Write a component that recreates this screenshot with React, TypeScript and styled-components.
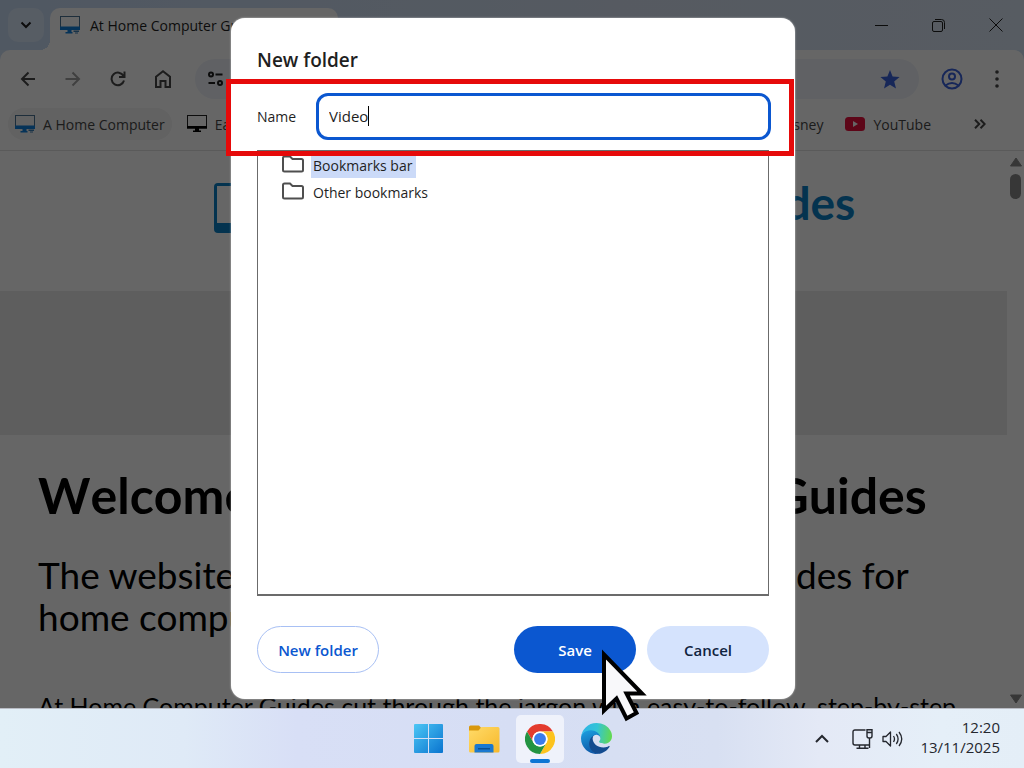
import React, { useState } from "react";
import styled, { createGlobalStyle, css } from "styled-components";

const UI_FONT = `"Open Sans", "Noto Sans", sans-serif`;
const PAGE_FONT = `Lato, "Liberation Sans", sans-serif`;

const GlobalStyle = createGlobalStyle`
  *, *::before, *::after { box-sizing: border-box; }
  body { margin: 0; overflow: hidden; font-family: ${UI_FONT}; font-size: 14px; color: #1f1f1f; }
  button, input { font: inherit; color: inherit; }
  h1, h2, p, ul { margin: 0; padding: 0; }
  svg { display: block; flex: none; }
`;

const Desktop = styled.div`
  height: 100vh;
  display: grid;
  grid-template-rows: minmax(0, 1fr) 60px;
`;

const BrowserWindow = styled.div`
  position: relative;
  display: flex;
  flex-direction: column;
  min-height: 0;
  background: #fff;
`;

const TitleBar = styled.header`
  flex: none;
  display: flex;
  height: 50px;
  padding-left: 8px;
  background: linear-gradient(90deg, #c8dcf5, #d6e2f3 60%, #dae5f4);
`;

const TabSearch = styled.button`
  display: grid;
  place-items: center;
  width: 36px;
  height: 34px;
  margin: 8px 6px 0 0;
  padding: 0;
  border: 0;
  border-radius: 10px;
  background: #dae8fb;
`;

const Tab = styled.div`
  position: relative;
  display: flex;
  align-items: center;
  gap: 10px;
  width: 288px;
  height: 42px;
  margin-top: 8px;
  padding: 0 10px 8px;
  border-radius: 10px 10px 0 0;
  background: #fff;
  font-size: 14px;
  white-space: nowrap;
  &::before {
    content: "";
    position: absolute;
    left: -10px;
    bottom: 0;
    width: 10px;
    height: 10px;
    background: radial-gradient(circle at 0 0, transparent 10px, #fff 10px);
  }
`;

const WindowControls = styled.div`
  display: flex;
  margin-left: auto;
`;

const WindowButton = styled.button`
  display: grid;
  place-items: center;
  width: 57px;
  height: 50px;
  padding: 0;
  border: 0;
  background: none;
`;

const ToolbarBack = styled.div`
  flex: none;
  background: #d0e0f5;
`;

const Toolbar = styled.div`
  display: flex;
  align-items: center;
  height: 58px;
  padding: 0 5px;
  border-radius: 10px 10px 0 0;
  background: #fff;
`;

const ToolButton = styled.button<{ $muted?: boolean }>`
  display: grid;
  place-items: center;
  width: 45px;
  height: 40px;
  padding: 0;
  border: 0;
  background: none;
  color: ${(p) => (p.$muted ? "#a0a0a0" : "#474747")};
`;

const Omnibox = styled.div`
  flex: 1;
  display: flex;
  align-items: center;
  justify-content: space-between;
  height: 40px;
  margin: 0 10px;
  padding: 0 19px 0 12px;
  border-radius: 20px;
  background: #eff3fa;
`;

const BookmarksBar = styled.nav`
  flex: none;
  display: flex;
  align-items: center;
  height: 43px;
  padding: 0 8px 10px;
  border-bottom: 1px solid #e2e2e2;
`;

const Bookmark = styled.a<{ $hovered?: boolean; $end?: boolean }>`
  display: flex;
  align-items: center;
  gap: 8px;
  height: 32px;
  padding: 0 7px;
  margin-right: 8px;
  margin-left: ${(p) => (p.$end ? "auto" : "0")};
  border-radius: 16px;
  background: ${(p) => (p.$hovered ? "#f4f4f4" : "transparent")};
  color: #474747;
  text-decoration: none;
  white-space: nowrap;
`;

const MoreBookmarks = styled.button`
  display: grid;
  place-items: center;
  width: 28px;
  margin: 0 22px 0 20px;
  padding: 0;
  border: 0;
  background: none;
`;

const Viewport = styled.div`
  flex: 1;
  min-height: 0;
  display: grid;
  grid-template-columns: minmax(0, 1fr) 17px;
`;

const Page = styled.div`
  overflow: hidden;
  font-family: ${PAGE_FONT};
  color: #000;
`;

const SiteHeader = styled.div`
  display: flex;
  justify-content: center;
  gap: 24px;
  height: 140px;
  padding: 24px 0 0 62px;
`;

const SiteName = styled.div`
  font-size: 46px;
  line-height: 56px;
  font-weight: 700;
  color: #0b80c6;
  white-space: nowrap;
`;

const Banner = styled.div`
  height: 144px;
  background: #ececec;
`;

const Article = styled.main`
  padding: 30px 38px 0;
  white-space: nowrap;
`;

const Heading = styled.h1`
  font-size: 50px;
  line-height: 60px;
  font-weight: 700;
  font-kerning: none;
`;

const Lead = styled.h2`
  margin-top: 29px;
  font-size: 37px;
  line-height: 42px;
  font-weight: 400;
`;

const Paragraph = styled.p`
  margin-top: 53px;
  font-size: 25px;
  line-height: 30px;
`;

const Scrollbar = styled.div`
  display: flex;
  flex-direction: column;
  align-items: center;
  padding: 6px 0 4px;
`;

const Thumb = styled.div`
  width: 11px;
  height: 25px;
  margin: 7px 0 auto;
  border-radius: 6px;
  background: #8b8b8b;
`;

const Backdrop = styled.div`
  position: absolute;
  inset: 0;
  display: flex;
  justify-content: center;
  padding: 18px 0 9px 2px;
  background: rgba(0, 0, 0, 0.6);
`;

const Dialog = styled.form`
  display: flex;
  flex-direction: column;
  width: 564px;
  padding: 28px 26px 26px;
  border-radius: 14px;
  background: #fff;
  box-shadow: 0 0 2px rgba(255, 255, 255, 0.7);
`;

const DialogTitle = styled.h2`
  font-size: 19px;
  line-height: 28px;
  font-weight: 600;
`;

const NameRow = styled.div`
  position: relative;
  display: flex;
  align-items: center;
  margin-top: 19px;
`;

const NameLabel = styled.label`
  width: 59px;
`;

const InputWrap = styled.div`
  position: relative;
  flex: 1;
  margin-right: -2px;
`;

const NameInput = styled.input`
  display: block;
  width: 100%;
  height: 47px;
  padding: 0 10px 2px;
  border: 3px solid #0b57d0;
  border-radius: 12px;
  background: #fff;
  font-size: 15px;
  outline: none;
  caret-color: transparent;
`;

const Caret = styled.span`
  position: absolute;
  top: 13px;
  left: 52px;
  width: 1px;
  height: 20px;
  background: #000;
`;

const Highlight = styled.div`
  position: absolute;
  inset: -14px -25px -16px -31px;
  border: 5px solid #e60a0a;
  pointer-events: none;
`;

const FolderTree = styled.ul`
  flex: 1;
  min-height: 0;
  margin-top: 10px;
  padding: 1px 24px;
  list-style: none;
  border: 1px solid #6b6b6b;
  border-bottom-width: 2px;
`;

const FolderRow = styled.button<{ $selected?: boolean }>`
  display: flex;
  align-items: flex-start;
  gap: 7px;
  height: 27px;
  padding: 3px 0 0;
  border: 0;
  background: none;
  span {
    padding: 1px 4px 2px 2px;
    line-height: 20px;
    background: ${(p) => (p.$selected ? "#cbdaf8" : "transparent")};
  }
`;

const Actions = styled.div`
  display: flex;
  gap: 11px;
  margin-top: 30px;
`;

const kinds = {
  outline: css`
    margin-right: auto;
    border: 1px solid #a8c0f4;
    background: #fff;
    color: #0b57d0;
  `,
  primary: css`
    border: 0;
    background: #0b57d0;
    color: #fff;
  `,
  tonal: css`
    border: 0;
    background: #d5e3fd;
    color: #10233f;
  `,
};

const ActionButton = styled.button<{ $kind: keyof typeof kinds }>`
  position: relative;
  width: 122px;
  height: 47px;
  padding: 0;
  border-radius: 24px;
  font-size: 15px;
  font-weight: 600;
  ${(p) => kinds[p.$kind]}
`;

const Pointer = styled.svg`
  position: absolute;
  z-index: 1;
  top: 20px;
  left: 84px;
  pointer-events: none;
`;

const Taskbar = styled.footer`
  display: grid;
  grid-template-columns: 1fr auto 1fr;
  align-items: center;
  border-top: 1px solid #b9bcc4;
  background: linear-gradient(90deg, #e2eff7 0%, #dfeaf7 18%, #d8dff6 29%, #d6def4 50%, #d8e0f2 70%, #e4e9f6 80%, #e5eff8 92%, #e4eef7 100%);
`;

const Apps = styled.div`
  grid-column: 2;
  display: flex;
  gap: 8px;
`;

const AppButton = styled.button<{ $active?: boolean }>`
  position: relative;
  display: grid;
  place-items: center;
  width: 48px;
  height: 48px;
  padding: 0;
  border: 0;
  border-radius: 5px;
  background: ${(p) => (p.$active ? "#eff2fb" : "none")};
  &::after {
    content: "";
    position: absolute;
    bottom: 0;
    left: 14px;
    width: 20px;
    height: 4px;
    border-radius: 2px;
    background: ${(p) => (p.$active ? "#0c76d4" : "none")};
  }
`;

const Tray = styled.div`
  display: flex;
  align-items: center;
  justify-content: flex-end;
  gap: 8px;
  padding-right: 24px;
  color: #24272e;
`;

const TrayButton = styled.button<{ $gapAfter?: number }>`
  margin-right: ${(p) => p.$gapAfter ?? 0}px;
  padding: 0;
  border: 0;
  background: none;
`;

const Clock = styled.time`
  margin-left: 8px;
  padding-bottom: 4px;
  font-size: 15px;
  line-height: 20px;
  text-align: right;
`;

const line = { fill: "none", stroke: "currentColor", strokeWidth: 2 } as const;

function Monitor() {
  return (
    <svg width="20" height="18" viewBox="0 0 20 18" aria-hidden="true">
      <rect x="0.5" y="0.5" width="19" height="12.5" fill="none" stroke="#222" />
      <path d="M0 11h20v2.500H0z" />
      <path d="M8 13h4v2.500h2V17H6v-1.500h2z" />
    </svg>
  );
}

function HomeComputerIcon() {
  return (
    <svg width="20" height="18" viewBox="0 0 20 18" aria-hidden="true">
      <rect x="0.5" y="0.5" width="19" height="12" fill="none" stroke="#4c7395" />
      <path d="M0 10.500h20V14H0z" fill="#0f80dc" />
      <path d="M7.500 14h4v2h1v1.500H5.500V16h2z" fill="#0f80dc" />
      <path d="M13.500 14.500h5.500v1.500h-5.500zM15 16.500h3v1h-3z" fill="#3d7fb5" />
    </svg>
  );
}

function Folder() {
  return (
    <svg width="22" height="18" viewBox="0 0 22 18" aria-hidden="true">
      <path d="M1 3Q1 1.500 2.500 1.500H8L10.500 4h9Q21 4 21 5.500V15q0 1.500-1.500 1.500h-17Q1 16.500 1 15z" fill="none" stroke="#4f4f4f" strokeWidth="2" />
    </svg>
  );
}

function Chrome() {
  return (
    <svg width="30" height="30" viewBox="0 0 48 48" aria-hidden="true">
      <circle cx="24" cy="24" r="24" fill="#fff" />
      <path d="M3.200 12A24 24 0 0 1 44.800 12H24A12 12 0 0 0 13.600 30z" fill="#e33b2e" />
      <path d="M44.800 12A24 24 0 0 1 24 48L34.400 30A12 12 0 0 0 24 12z" fill="#fcc31e" />
      <path d="M24 48A24 24 0 0 1 3.200 12L13.600 30A12 12 0 0 0 34.400 30z" fill="#229342" />
      <circle cx="24" cy="24" r="12" fill="#fff" />
      <circle cx="24" cy="24" r="9.500" fill="#3a7cec" />
    </svg>
  );
}

function Edge() {
  return (
    <svg width="31" height="31" viewBox="0 0 256 256" aria-hidden="true">
      <defs>
        <linearGradient id="edgeTop" x1="0" y1="0.4" x2="1" y2="0.5">
          <stop offset="0" stopColor="#2fb3e8" />
          <stop offset="0.5" stopColor="#34c4d6" />
          <stop offset="1" stopColor="#62d94f" />
        </linearGradient>
        <linearGradient id="edgeLeft" x1="0.3" y1="0" x2="0.6" y2="1">
          <stop offset="0" stopColor="#1c9fe0" />
          <stop offset="1" stopColor="#0d54a4" />
        </linearGradient>
      </defs>
      <path d="M231 190.500c-3.400 1.800-6.900 3.300-10.500 4.700a101.900 101.900 0 0 1-35.900 6.500c-47.300 0-88.500-32.500-88.500-74.300a31.500 31.500 0 0 1 16.400-27.300c-42.800 1.800-53.800 46.400-53.800 72.500 0 73.900 68.100 81.400 82.800 81.400 7.900 0 19.800-2.300 27-4.600l1.300-.4a128.300 128.300 0 0 0 66.600-52.800 4 4 0 0 0-5.400-5.700z" fill="#134b8f" />
      <path d="M105.700 241.400a79.200 79.200 0 0 1-22.700-21.300 80.700 80.700 0 0 1 29.500-120c3.200-1.500 8.500-4.100 15.600-4a32.400 32.400 0 0 1 25.700 13 31.900 31.900 0 0 1 6.300 18.700c0-.2 24.500-79.600-80-79.600-43.900 0-80 41.700-80 78.200a130.200 130.200 0 0 0 12.100 56 128 128 0 0 0 156.400 67 75.500 75.500 0 0 1-62.900-8z" fill="url(#edgeLeft)" />
      <path d="M152.300 148.900c-.9 1-3.400 2.500-3.400 5.600 0 2.600 1.700 5.200 4.800 7.300 14.400 10 41.500 8.700 41.600 8.700a59.600 59.600 0 0 0 30.300-8.300 61.400 61.400 0 0 0 30.400-52.900c.3-22.400-8-37.300-11.300-43.900C223.500 23.900 177.700 0 128 0A128 128 0 0 0 0 126.200c.5-36.500 36.800-66 80-66 3.500 0 23.500.3 42 10 16.300 8.600 24.900 19 30.800 29.200 6.200 10.700 7.300 24.100 7.300 29.500s-2.700 13.300-7.800 20z" fill="url(#edgeTop)" />
    </svg>
  );
}

export default function App() {
  const [name, setName] = useState("Video");
  return (
    <>
      <GlobalStyle />
      <Desktop>
        <BrowserWindow>
          <TitleBar>
            <TabSearch aria-label="Search tabs">
              <svg width="12" height="8" viewBox="0 0 12 8"><path d="M1.500 1.500 6 6l4.500-4.500" {...line} /></svg>
            </TabSearch>
            <Tab>
              <HomeComputerIcon />
              At Home Computer Guides
            </Tab>
            <WindowControls>
              <WindowButton aria-label="Minimise">
                <svg width="13" height="13" viewBox="0 0 13 13"><path d="M0 6.500h13" {...line} strokeWidth="1" /></svg>
              </WindowButton>
              <WindowButton aria-label="Restore">
                <svg width="13" height="13" viewBox="0 0 13 13">
                  <rect x="0.5" y="2.500" width="10" height="10" rx="1.500" {...line} strokeWidth="1" />
                  <path d="M3 .5h6.500q3 0 3 3V10" {...line} strokeWidth="1" />
                </svg>
              </WindowButton>
              <WindowButton aria-label="Close">
                <svg width="14" height="14" viewBox="0 0 14 14"><path d="M.5.5l13 13m0-13-13 13" {...line} strokeWidth="1" /></svg>
              </WindowButton>
            </WindowControls>
          </TitleBar>

          <ToolbarBack>
            <Toolbar>
              <ToolButton aria-label="Back">
                <svg width="16" height="16" viewBox="0 0 16 16"><path d="M15 8H2m6.500-6.500L2 8l6.500 6.500" {...line} /></svg>
              </ToolButton>
              <ToolButton aria-label="Forward" $muted>
                <svg width="16" height="16" viewBox="0 0 16 16"><path d="M.5 8H14M7.500 1.500 14 8l-6.500 6.500" {...line} /></svg>
              </ToolButton>
              <ToolButton aria-label="Reload">
                <svg width="16" height="16" viewBox="0 0 16 16">
                  <path d="M13.500 5A6.300 6.300 0 1 0 14 9.500M14.500.5V6H9" {...line} />
                </svg>
              </ToolButton>
              <ToolButton aria-label="Home">
                <svg width="16" height="18" viewBox="0 0 16 18">
                  <path d="M1 6.800 8 1.300l7 5.500V17h-4.500v-6h-5v6H1z" {...line} />
                </svg>
              </ToolButton>
              <Omnibox>
                <svg width="18" height="16" viewBox="0 0 18 16">
                  <circle cx="4" cy="3.500" r="2" {...line} />
                  <circle cx="13" cy="12" r="2" {...line} />
                  <path d="M8.500 3.500h7M1.500 12h6.500" {...line} />
                </svg>
                <svg width="20" height="19" viewBox="0 0 20 19">
                  <path d="M10 0l2.600 6.500 7 .5-5.400 4.500L16 18.500l-6-3.800-6 3.800 1.800-7L.4 7l7-.5z" fill="#3a62dd" />
                </svg>
              </Omnibox>
              <ToolButton aria-label="Profile">
                <svg width="22" height="22" viewBox="0 0 22 22">
                  <g fill="none" stroke="#3a62dd" strokeWidth="2">
                    <circle cx="11" cy="11" r="9.500" />
                    <circle cx="11" cy="8.500" r="3" />
                    <path d="M4.500 17.500q6.500-5 13 0" />
                  </g>
                </svg>
              </ToolButton>
              <ToolButton aria-label="Menu">
                <svg width="4" height="18" viewBox="0 0 4 18" fill="currentColor">
                  <circle cx="2" cy="2" r="1.800" /><circle cx="2" cy="9" r="1.800" /><circle cx="2" cy="16" r="1.800" />
                </svg>
              </ToolButton>
            </Toolbar>
          </ToolbarBack>

          <BookmarksBar aria-label="Bookmarks">
            <Bookmark href="#home" $hovered><HomeComputerIcon />A Home Computer</Bookmark>
            <Bookmark href="#easy"><Monitor />Easy</Bookmark>
            <Bookmark href="#disney" $end>Disney</Bookmark>
            <Bookmark href="#youtube">
              <svg width="20" height="14" viewBox="0 0 20 14" aria-hidden="true">
                <rect width="20" height="14" rx="3.500" fill="#e8103c" />
                <path d="M8 4l5 3-5 3z" fill="#fff" />
              </svg>
              YouTube
            </Bookmark>
            <MoreBookmarks aria-label="More bookmarks">
              <svg width="12" height="10" viewBox="0 0 12 10"><path d="M1 .8 5.200 5 1 9.200M6.500.8 10.700 5 6.500 9.200" {...line} stroke="#474747" /></svg>
            </MoreBookmarks>
          </BookmarksBar>

          <Viewport>
            <Page>
              <SiteHeader>
                <svg width="66" height="66" viewBox="0 0 66 66" aria-hidden="true">
                  <rect x="0" y="8" width="66" height="50" rx="4" fill="#0b80c6" />
                  <rect x="3" y="11" width="60" height="37" fill="#fff" />
                </svg>
                <SiteName>At Home Computer Guides</SiteName>
              </SiteHeader>
              <Banner />
              <Article>
                <Heading>Welcome to At Home Computer Guides</Heading>
                <Lead>The website with simple, easy-to-follow PC guides for<br />home computer users</Lead>
                <Paragraph>At Home Computer Guides cut through the jargon with easy-to-follow, step-by-step</Paragraph>
              </Article>
            </Page>
            <Scrollbar aria-hidden="true">
              <svg width="12" height="10" viewBox="0 0 12 10"><path d="M6 1l5.500 8H.5z" fill="#8b8b8b" stroke="#8b8b8b" strokeLinejoin="round" /></svg>
              <Thumb />
              <svg width="12" height="10" viewBox="0 0 12 10"><path d="M6 9l5.500-8H.5z" fill="#8b8b8b" stroke="#8b8b8b" strokeLinejoin="round" /></svg>
            </Scrollbar>
          </Viewport>

          <Backdrop>
            <Dialog role="dialog" aria-labelledby="dialog-title" onSubmit={(e) => e.preventDefault()}>
              <DialogTitle id="dialog-title">New folder</DialogTitle>
              <NameRow>
                <NameLabel htmlFor="folder-name">Name</NameLabel>
                <InputWrap>
                  <NameInput id="folder-name" type="text" value={name} onChange={(e) => setName(e.target.value)} />
                  <Caret />
                </InputWrap>
                <Highlight />
              </NameRow>
              <FolderTree>
                <li><FolderRow type="button" $selected><Folder /><span>Bookmarks bar</span></FolderRow></li>
                <li><FolderRow type="button"><Folder /><span>Other bookmarks</span></FolderRow></li>
              </FolderTree>
              <Actions>
                <ActionButton type="button" $kind="outline">New folder</ActionButton>
                <ActionButton type="submit" $kind="primary">
                  Save
                  <Pointer width="50" height="78" viewBox="0 0 50 78" aria-hidden="true">
                    <path d="M6 8.500v56l12.500-12 10 20 10-5.500-10-19.500h15.500z" fill="#f8f8fa" stroke="#000" strokeWidth="4" />
                  </Pointer>
                </ActionButton>
                <ActionButton type="button" $kind="tonal">Cancel</ActionButton>
              </Actions>
            </Dialog>
          </Backdrop>
        </BrowserWindow>

        <Taskbar>
          <Apps>
            <AppButton aria-label="Start">
              <svg width="29" height="29" viewBox="0 0 29 29">
                <defs>
                  <linearGradient id="win" x1="0" y1="0" x2="1" y2="1">
                    <stop offset="0" stopColor="#4cc6f5" /><stop offset="1" stopColor="#0a74cf" />
                  </linearGradient>
                  <mask id="panes"><path d="M0 0h14v14H0zM15 0h14v14H15zM0 15h14v14H0zM15 15h14v14H15z" fill="#fff" /></mask>
                </defs>
                <rect width="29" height="29" rx="1" fill="url(#win)" mask="url(#panes)" />
              </svg>
            </AppButton>
            <AppButton aria-label="File Explorer">
              <svg width="32" height="28" viewBox="0 0 32 28">
                <defs>
                  <linearGradient id="fold" x1="0" y1="0" x2="1" y2="1">
                    <stop offset="0" stopColor="#ffdb69" /><stop offset="1" stopColor="#f7b82a" />
                  </linearGradient>
                </defs>
                <path d="M1 2q0-1.500 1.500-1.500H11L14 4v4H1z" fill="#d9980c" />
                <path d="M1 5.500h9.500l3-3.500H30q1.500 0 1.500 1.500V26q0 1.500-1.500 1.500H2.500Q1 27.500 1 26z" fill="url(#fold)" />
                <path d="M6.500 27.500V21q0-2 2-2h15q2 0 2 2v6.500z" fill="#1a78d0" />
                <path d="M10 23h12v1.500H10z" fill="#0b4f92" />
              </svg>
            </AppButton>
            <AppButton aria-label="Google Chrome" $active><Chrome /></AppButton>
            <AppButton aria-label="Microsoft Edge"><Edge /></AppButton>
          </Apps>
          <Tray>
            <TrayButton aria-label="Show hidden icons" $gapAfter={15}>
              <svg width="14" height="9" viewBox="0 0 14 9"><path d="M1 8l6-6 6 6" {...line} /></svg>
            </TrayButton>
            <TrayButton aria-label="Network">
              <svg width="22" height="20" viewBox="0 0 22 20">
                <g fill="none" stroke="currentColor" strokeWidth="1.400">
                  <path d="M13.500 1H3Q1 1 1 3v11q0 2 2 2h14M4.500 19.200h12M7.500 16v3M13 16v3" />
                  <path d="M15 3.500h5V7Q20 9 18 9h-1q-2 0-2-2zM15 3.500V.8h5v2.700M17.500 9v10" />
                </g>
              </svg>
            </TrayButton>
            <TrayButton aria-label="Volume">
              <svg width="22" height="18" viewBox="0 0 22 18">
                <g fill="none" stroke="currentColor" strokeWidth="1.300">
                  <path d="M1 6.500h3L8.500 2v14L4 11.500H1z" strokeLinejoin="round" />
                  <path d="M11.500 6q2 3 0 6M14.300 4q3.600 5 0 10M17 2q5.500 7 0 14" />
                </g>
              </svg>
            </TrayButton>
            <Clock>12:20<br />13/11/2025</Clock>
          </Tray>
        </Taskbar>
      </Desktop>
    </>
  );
}
